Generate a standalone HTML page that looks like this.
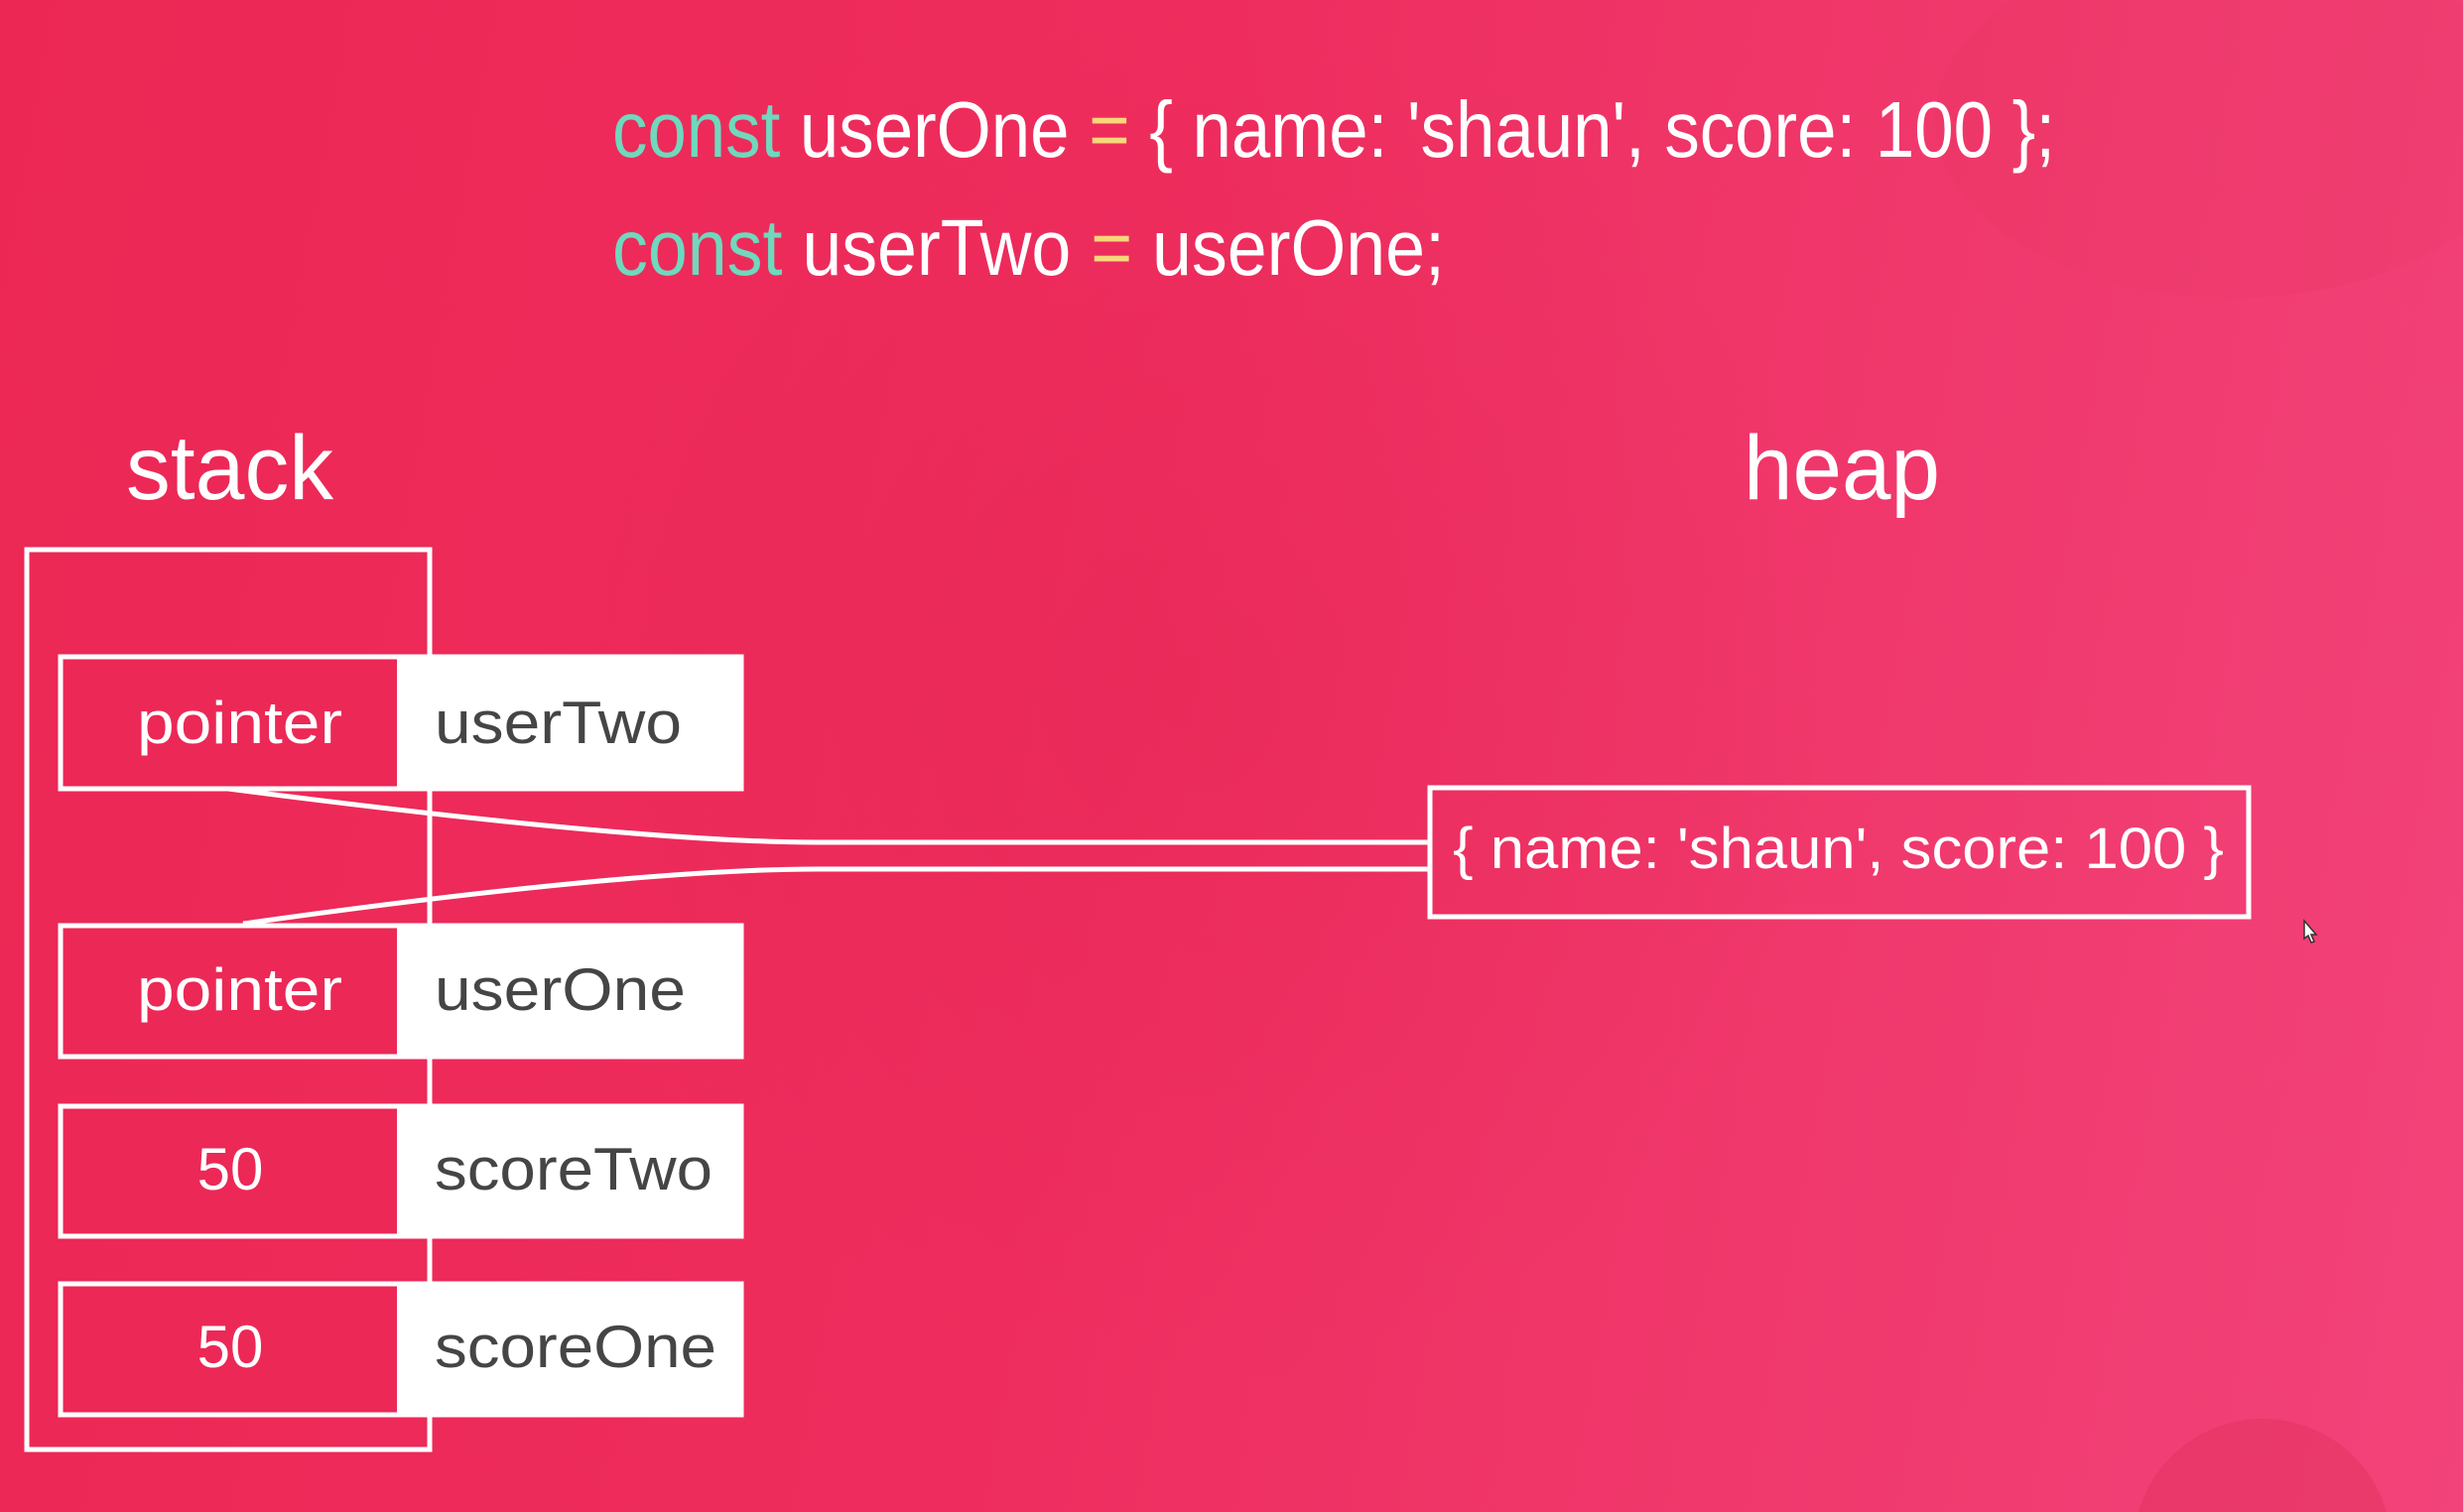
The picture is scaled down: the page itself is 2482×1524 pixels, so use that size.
<!DOCTYPE html>
<html><head><meta charset="utf-8"><style>
html,body{margin:0;padding:0;width:2482px;height:1524px;overflow:hidden}
body{background:linear-gradient(100deg,#ec2754 0%,#ee2d5e 45%,#f2437a 100%)}
svg{position:absolute;left:0;top:0;display:block}
text{font-family:"Liberation Sans",sans-serif}
</style></head><body>
<svg width="2482" height="1524" viewBox="0 0 2482 1524">
<defs>
<radialGradient id="b1" cx="0.5" cy="0.5" r="0.5"><stop offset="0" stop-color="#e0234f" stop-opacity="0.3"/><stop offset="1" stop-color="#e0234f" stop-opacity="0"/></radialGradient>
</defs>
<ellipse cx="1200" cy="700" rx="650" ry="700" fill="url(#b1)"/>
<ellipse cx="2250" cy="120" rx="300" ry="180" fill="#e23461" opacity="0.15"/>
<circle cx="2280" cy="1560" r="130" fill="#d8284f" opacity="0.3"/>

<g fill="#fff" font-size="80">
<text x="617" y="158" textLength="1454" lengthAdjust="spacingAndGlyphs"><tspan fill="#6fd8bd">const</tspan> userOne <tspan fill="#f7d77a">=</tspan> { name: 'shaun', score: 100 };</text>
<text x="617" y="277" textLength="839" lengthAdjust="spacingAndGlyphs"><tspan fill="#6fd8bd">const</tspan> userTwo <tspan fill="#f7d77a">=</tspan> userOne;</text>
</g>
<text x="127" y="503" font-size="92" fill="#fff" textLength="209" lengthAdjust="spacingAndGlyphs">stack</text>
<text x="1757" y="503" font-size="92" fill="#fff" textLength="198" lengthAdjust="spacingAndGlyphs">heap</text>

<rect x="27" y="554" width="406" height="907" fill="none" stroke="#fff" stroke-width="5"/>

<g stroke="#fff" stroke-width="5" fill="none">
<path d="M230 795 C 500 830, 700 849, 823 849 L 1439 849"/>
<path d="M245 931 C 500 895, 700 876, 823 876 L 1439 876"/>
</g>

<g>
<rect x="61" y="662" width="686" height="133" fill="#ec2856" stroke="#fff" stroke-width="5"/>
<rect x="400" y="660" width="349" height="137" fill="#fff"/>
<rect x="61" y="933" width="686" height="132" fill="#ec2856" stroke="#fff" stroke-width="5"/>
<rect x="400" y="931" width="349" height="136" fill="#fff"/>
<rect x="61" y="1115" width="686" height="131" fill="#ec2856" stroke="#fff" stroke-width="5"/>
<rect x="400" y="1113" width="349" height="135" fill="#fff"/>
<rect x="61" y="1294" width="686" height="132" fill="#ec2856" stroke="#fff" stroke-width="5"/>
<rect x="400" y="1292" width="349" height="136" fill="#fff"/>
</g>
<g font-size="60">
<text x="138" y="749" fill="#fff" textLength="207" lengthAdjust="spacingAndGlyphs">pointer</text>
<text x="138" y="1018" fill="#fff" textLength="207" lengthAdjust="spacingAndGlyphs">pointer</text>
<text x="232" y="1199" fill="#fff" text-anchor="middle">50</text>
<text x="232" y="1378" fill="#fff" text-anchor="middle">50</text>
<text x="438" y="749" fill="#454545" textLength="249" lengthAdjust="spacingAndGlyphs">userTwo</text>
<text x="438" y="1018" fill="#454545" textLength="253" lengthAdjust="spacingAndGlyphs">userOne</text>
<text x="438" y="1199" fill="#454545" textLength="280" lengthAdjust="spacingAndGlyphs">scoreTwo</text>
<text x="438" y="1378" fill="#454545" textLength="284" lengthAdjust="spacingAndGlyphs">scoreOne</text>
</g>

<rect x="1441" y="794" width="825" height="130" fill="none" stroke="#fff" stroke-width="5"/>
<text x="1464" y="875" font-size="58" fill="#fff" textLength="777" lengthAdjust="spacingAndGlyphs">{ name: 'shaun', score: 100 }</text>

<path d="M2322 928 v18 l4 -3 3 7 3 -1 -3 -7 5 0 z" fill="#fff" stroke="#333" stroke-width="1.5"/>
</svg>
</body></html>
